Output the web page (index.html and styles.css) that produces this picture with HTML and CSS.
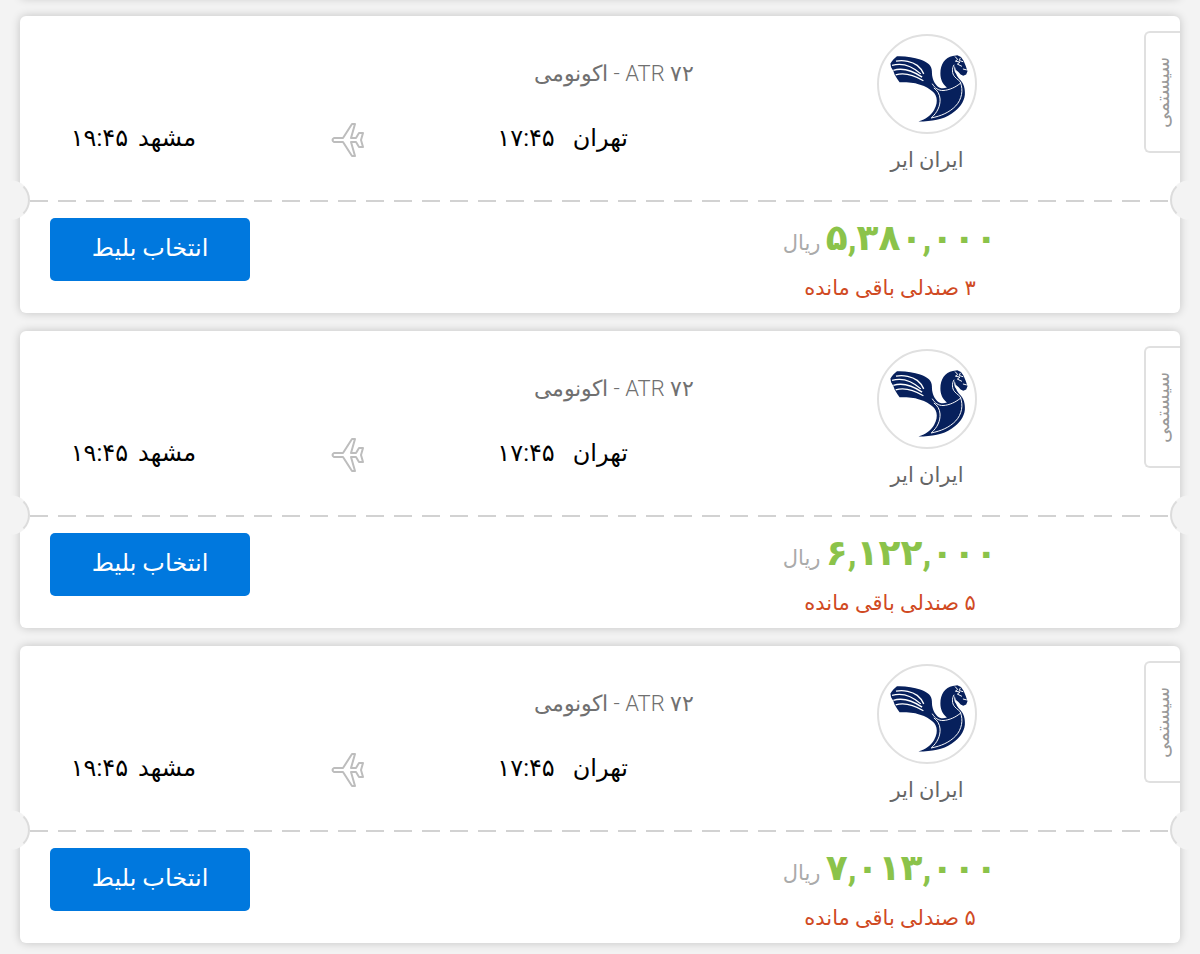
FILE: index.html
```html
<!DOCTYPE html>
<html lang="fa" dir="rtl">
<head>
  <title>انتخاب بلیط</title>
  <meta charset="UTF-8">
  <link rel="stylesheet" href="styles.css">
</head>
<body>
  <!-- Shared icons -->
  <svg class="sprite" aria-hidden="true">
    <symbol id="iranair" viewBox="54 44 294 294">
      <path fill="#07205c" d="M109 106C135 105 160 109 180 116C204 124 216 135 216 152C216 170 220 184 232 197C239 204 250 206 262 202C248 190 242 176 242 158C242 130 256 109 280 105L294 103L305 108L313 120L320 137L325 152L321 162L312 166L304 162L298 155L290 148C288 160 294 170 303 179C314 190 318 206 317 224C315 246 299 268 276 282C250 300 216 305 175 306C198 299 214 287 223 270C238 243 231 220 210 208C198 198 186 195 172 191C154 185 138 188 117 186L110 176L102 163L98 151L91 140L89 128C95 119 102 111 109 106Z"/>
      <path fill="none" stroke="#fff" stroke-width="4" d="M106 121C130 116 156 123 171 134C180 141 187 151 191 160M94 134C122 126 154 135 182 160M98 149C128 140 157 150 186 170M105 163C134 154 160 163 190 181"/>
      <path fill="none" stroke="#fff" stroke-width="3" d="M217 190C225 204 236 211 250 211C270 210 290 200 304 188C312 209 308 238 289 258C270 278 244 289 214 295C233 278 242 258 241 237C240 222 233 211 222 203M284 132C277 143 277 159 286 169C292 176 302 181 305 188"/>
      <path fill="#fff" d="M286 136L290 151L298 160L310 168L304 172L296 165C286 158 282 147 286 136Z"/>
      <path fill="none" stroke="#fff" stroke-width="3" d="M287 107L295 116L288 121L302 124L294 130L308 137M303 111L300 119L312 123M311 145L323 148"/>
    </symbol>
    <symbol id="plane" viewBox="0 0 34 36">
      <path fill="none" stroke="#bdbdbd" stroke-width="2" stroke-linejoin="round" d="M3 16H12L21 2H24L20 16H25L28 11H32L30 18L32 25H28L25 20H20L24 34H21L12 20H3Q0 18 3 16Z"/>
    </symbol>
  </svg>

  <div class="ticket previous"></div>

  <div class="ticket">
    <div class="tag">سیستمی</div>
    <div class="flight">
      <div class="airline">
        <svg class="logo" role="img" aria-label="ایران ایر"><use href="#iranair"/></svg>
        <div class="airline-name">ایران ایر</div>
      </div>
      <div class="details">
        <div class="aircraft"><bdi>ATR ۷۲</bdi> - اکونومی</div>
        <div class="route">
          <div class="stop origin"><span>تهران</span><span>۱۷:۴۵</span></div>
          <svg class="plane"><use href="#plane"/></svg>
          <div class="stop"><span>مشهد</span><span>۱۹:۴۵</span></div>
        </div>
      </div>
    </div>
    <div class="divider"></div>
    <div class="purchase">
      <div class="fare">
        <div class="price"><strong>۵,۳۸۰,۰۰۰</strong> <span>ریال</span></div>
        <div class="seats">۳ صندلی باقی مانده</div>
      </div>
      <button type="button" class="button">انتخاب بلیط</button>
    </div>
  </div>

  <div class="ticket">
    <div class="tag">سیستمی</div>
    <div class="flight">
      <div class="airline">
        <svg class="logo" role="img" aria-label="ایران ایر"><use href="#iranair"/></svg>
        <div class="airline-name">ایران ایر</div>
      </div>
      <div class="details">
        <div class="aircraft"><bdi>ATR ۷۲</bdi> - اکونومی</div>
        <div class="route">
          <div class="stop origin"><span>تهران</span><span>۱۷:۴۵</span></div>
          <svg class="plane"><use href="#plane"/></svg>
          <div class="stop"><span>مشهد</span><span>۱۹:۴۵</span></div>
        </div>
      </div>
    </div>
    <div class="divider"></div>
    <div class="purchase">
      <div class="fare">
        <div class="price"><strong>۶,۱۲۲,۰۰۰</strong> <span>ریال</span></div>
        <div class="seats">۵ صندلی باقی مانده</div>
      </div>
      <button type="button" class="button">انتخاب بلیط</button>
    </div>
  </div>

  <div class="ticket">
    <div class="tag">سیستمی</div>
    <div class="flight">
      <div class="airline">
        <svg class="logo" role="img" aria-label="ایران ایر"><use href="#iranair"/></svg>
        <div class="airline-name">ایران ایر</div>
      </div>
      <div class="details">
        <div class="aircraft"><bdi>ATR ۷۲</bdi> - اکونومی</div>
        <div class="route">
          <div class="stop origin"><span>تهران</span><span>۱۷:۴۵</span></div>
          <svg class="plane"><use href="#plane"/></svg>
          <div class="stop"><span>مشهد</span><span>۱۹:۴۵</span></div>
        </div>
      </div>
    </div>
    <div class="divider"></div>
    <div class="purchase">
      <div class="fare">
        <div class="price"><strong>۷,۰۱۳,۰۰۰</strong> <span>ریال</span></div>
        <div class="seats">۵ صندلی باقی مانده</div>
      </div>
      <button type="button" class="button">انتخاب بلیط</button>
    </div>
  </div>
</body>
</html>
```

FILE: styles.css
```css
body {
  margin: 0;
  padding: 0 20px 11px;
  background-color: #f3f3f3;
  font-family: Roboto, "DejaVu Sans", sans-serif;
  font-size: 21px;
  color: #666;
}

.sprite {
  position: absolute;
  width: 0;
  height: 0;
}

.ticket {
  position: relative;
  background-color: #fff;
  border-radius: 6px;
  box-shadow: 0 0 10px rgba(0,0,0,0.2);
  margin-bottom: 18px;
}

.ticket:last-child {
  margin-bottom: 0;
}

/* bottom edge of the card above */
.ticket.previous {
  height: 8px;
  margin-top: -10px;
}

.tag {
  position: absolute;
  top: 15px;
  right: 0;
  box-sizing: border-box;
  width: 36px;
  height: 122px;
  line-height: 34px;
  border: 2px solid #e0e0e0;
  border-left: none;
  border-radius: 0 6px 6px 0;
  writing-mode: vertical-rl;
  transform: rotate(180deg);
  text-align: center;
  font-size: 19px;
  color: #999;
}

.flight {
  display: flex;
  padding: 18px 20px 0 6px;
}

.airline {
  width: 466px;
  text-align: center;
}

.logo {
  display: block;
  box-sizing: border-box;
  width: 100px;
  height: 100px;
  margin: 0 auto;
  border: 2px solid #e0e0e0;
  border-radius: 50%;
}

.airline-name {
  margin: 10px 0 24px;
  line-height: 32px;
}

.details {
  flex: 1;
  padding-top: 24px;
}

.aircraft {
  line-height: 32px;
  font-weight: 300;
  font-size: 22px;
  color: #707070;
}

.route {
  display: grid;
  grid-template-columns: 1fr 1fr 1fr;
  justify-items: center;
  margin: 30px 24px 0 0;
}

.stop {
  display: flex;
  gap: 10px;
  line-height: 36px;
  font-size: 24px;
  color: #000;
}

.origin {
  gap: 18px;
}

.plane {
  width: 34px;
  height: 36px;
  margin-top: 2px;
}

.divider {
  position: relative;
  height: 2px;
  margin: 0 10px;
  background: repeating-linear-gradient(to right, #d2d2d2 0 18px, transparent 18px 28px);
}

/* notches punched in both sides of the ticket */
.divider:before, .divider:after {
  position: absolute;
  content: "";
  box-sizing: border-box;
  top: -20px;
  width: 20px;
  height: 40px;
  background-color: #f3f3f3;
  border: 2px solid transparent;
}

.divider:before {
  left: -20px;
  border-left: none;
  border-right-color: #dcdcdc;
  border-radius: 0 20px 20px 0;
}

.divider:after {
  right: -20px;
  border-right: none;
  border-left-color: #dcdcdc;
  border-radius: 20px 0 0 20px;
}

.purchase {
  display: flex;
  justify-content: space-between;
  align-items: flex-start;
  padding: 0 30px 10px;
}

.fare {
  width: 520px;
  text-align: center;
}

.price {
  line-height: 72px;
  color: #aaa;
}

.price strong {
  font-size: 36px;
  color: #8bc34a;
}

.seats {
  line-height: 30px;
  margin-top: -6px;
  font-size: 21px;
  color: #d04a23;
}

.button {
  width: 200px;
  height: 63px;
  margin-top: 16px;
  padding: 0 0 4px;
  background-color: #0078de;
  color: white;
  border: none;
  border-radius: 5px;
  cursor: pointer;
  font-family: inherit;
  font-size: 24px;
}

.button:hover {
  background-color: #0063b1;
}
```
